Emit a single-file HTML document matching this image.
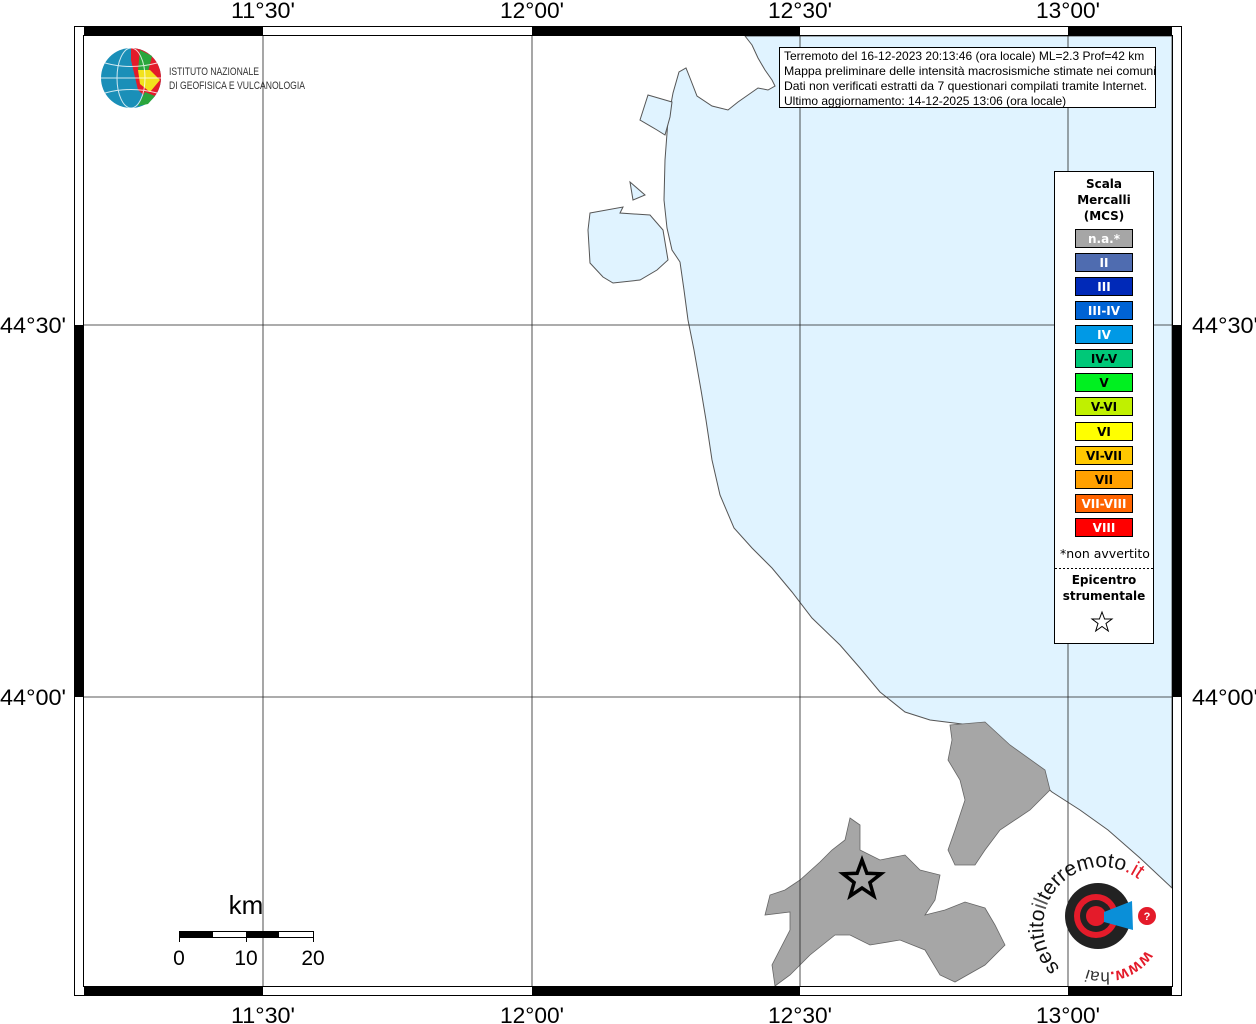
<!DOCTYPE html>
<html><head><meta charset="utf-8"><style>
html,body{margin:0;padding:0;background:#fff;}
svg{display:block;font-family:"Liberation Sans",sans-serif;}
.lbl{font-size:22px;fill:#000;}
.lg{font-family:"DejaVu Sans",sans-serif;font-weight:bold;font-size:12px;text-anchor:middle;}
</style></head><body>
<svg width="1256" height="1024" viewBox="0 0 1256 1024" xmlns="http://www.w3.org/2000/svg">
<rect width="1256" height="1024" fill="#fff"/>
<path d="M745,36 L752,45 L758,58 L765,70 L772,80 L775,86 L768,90 L758,88 L748,95 L738,102 L728,110 L712,106 L697,96 L690,78 L686,68 L679,72 L673,93 L668,120 L665,160 L664,200 L667,228 L672,250 L680,262 L684,290 L688,320 L694,350 L701,390 L706,420 L712,460 L720,495 L734,528 L752,548 L772,568 L792,592 L812,618 L840,645 L860,668 L880,692 L905,712 L930,720 L962,724 L992,745 L1022,766 L1052,792 L1080,810 L1108,830 L1140,858 L1172,888 L1172,36 Z" fill="#e0f3ff" stroke="#555" stroke-width="1"/>
<path d="M590,213 L623,207 L620,213 L650,215 L663,230 L668,260 L657,270 L640,280 L613,283 L603,277 L590,263 L588,230 Z" fill="#e0f3ff" stroke="#555" stroke-width="1"/>
<path d="M630,182 L645,195 L633,200 Z" fill="#e0f3ff" stroke="#555" stroke-width="1"/>
<path d="M640,120 L648,95 L672,102 L670,117 L665,135 L657,130 Z" fill="#e0f3ff" stroke="#555" stroke-width="1"/>
<path d="M950,725 L985,722 L1010,745 L1045,770 L1050,790 L1030,810 L1000,830 L985,850 L975,865 L955,865 L948,850 L955,830 L965,800 L960,780 L948,760 L952,740 Z" fill="#a6a6a6" stroke="#666" stroke-width="0.8"/>
<path d="M850,818 L860,825 L860,850 L880,860 L905,855 L920,870 L940,875 L935,900 L925,915 L945,910 L965,902 L985,908 L995,925 L1005,945 L985,965 L955,982 L940,975 L925,950 L900,940 L870,945 L850,935 L835,935 L810,955 L790,975 L775,986 L772,965 L790,930 L790,912 L765,915 L770,895 L785,890 L800,880 L820,862 L832,850 L845,840 Z" fill="#a6a6a6" stroke="#666" stroke-width="0.8"/>
<g stroke="#222" stroke-width="0.8">
<line x1="263" y1="36" x2="263" y2="986"/><line x1="532" y1="36" x2="532" y2="986"/>
<line x1="800" y1="36" x2="800" y2="986"/><line x1="1068" y1="36" x2="1068" y2="986"/>
<line x1="84" y1="325" x2="1172" y2="325"/><line x1="84" y1="697" x2="1172" y2="697"/>
</g>
<rect x="74.5" y="26.5" width="1107" height="969" fill="none" stroke="#000"/>
<rect x="83.5" y="35.5" width="1089" height="951" fill="none" stroke="#000"/>
<g fill="#000">
<rect x="84" y="27" width="179" height="9"/><rect x="532" y="27" width="268" height="9"/><rect x="1068" y="27" width="104" height="9"/>
<rect x="84" y="986" width="179" height="9"/><rect x="532" y="986" width="268" height="9"/><rect x="1068" y="986" width="104" height="9"/>
<rect x="75" y="325" width="9" height="372"/><rect x="1172" y="325" width="9" height="372"/>
</g>
<g class="lbl" text-anchor="middle">
<text x="263" y="18" textLength="64" lengthAdjust="spacingAndGlyphs">11°30'</text><text x="532" y="18" textLength="64" lengthAdjust="spacingAndGlyphs">12°00'</text><text x="800" y="18" textLength="64" lengthAdjust="spacingAndGlyphs">12°30'</text><text x="1068" y="18" textLength="64" lengthAdjust="spacingAndGlyphs">13°00'</text>
<text x="263" y="1023" textLength="64" lengthAdjust="spacingAndGlyphs">11°30'</text><text x="532" y="1023" textLength="64" lengthAdjust="spacingAndGlyphs">12°00'</text><text x="800" y="1023" textLength="64" lengthAdjust="spacingAndGlyphs">12°30'</text><text x="1068" y="1023" textLength="64" lengthAdjust="spacingAndGlyphs">13°00'</text>
</g>
<g class="lbl"><text x="0" y="333" textLength="66" lengthAdjust="spacingAndGlyphs">44°30'</text><text x="0" y="705" textLength="66" lengthAdjust="spacingAndGlyphs">44°00'</text>
<text x="1192" y="333" textLength="66" lengthAdjust="spacingAndGlyphs">44°30'</text><text x="1192" y="705" textLength="66" lengthAdjust="spacingAndGlyphs">44°00'</text></g>
<circle cx="131" cy="78" r="30" fill="#1a8fb8"/>
<path d="M131,48 A30,30 0 0,1 161,78 A30,30 0 0,1 150,101 L138,90 L131,60 Z" fill="#e41b2a"/>
<path d="M140,50 L152,56 L148,72 L138,70 Z" fill="#2aa63c"/>
<path d="M138,70 L150,70 L160,80 L150,92 L140,84 Z" fill="#f2e21c"/>
<path d="M145,92 L155,96 L148,104 L138,106 Z" fill="#2aa63c"/>
<g stroke="#fff" stroke-width="1" fill="none" opacity="0.8"><ellipse cx="131" cy="78" rx="14" ry="30"/><line x1="101" y1="78" x2="161" y2="78"/><path d="M105,63 Q131,70 157,63"/><path d="M105,93 Q131,86 157,93"/></g>
<text x="169" y="75" font-size="11" fill="#333" textLength="90" lengthAdjust="spacingAndGlyphs">ISTITUTO NAZIONALE</text>
<text x="169" y="89" font-size="11" fill="#333" textLength="136" lengthAdjust="spacingAndGlyphs">DI GEOFISICA E VULCANOLOGIA</text>
<rect x="779.5" y="47.5" width="376" height="60" fill="#fff" stroke="#000"/>
<g font-size="12" fill="#000">
<text x="784" y="60">Terremoto del 16-12-2023 20:13:46 (ora locale) ML=2.3 Prof=42 km</text>
<text x="784" y="75" textLength="372" lengthAdjust="spacingAndGlyphs">Mappa preliminare delle intensità macrosismiche stimate nei comuni</text>
<text x="784" y="90" textLength="363" lengthAdjust="spacingAndGlyphs">Dati non verificati estratti da 7 questionari compilati tramite Internet.</text>
<text x="784" y="105">Ultimo aggiornamento: 14-12-2025 13:06 (ora locale)</text>
</g>
<rect x="1054.5" y="171.5" width="99" height="472" fill="#fff" stroke="#000"/>
<g class="lg"><text x="1104" y="188">Scala</text><text x="1104" y="204">Mercalli</text><text x="1104" y="220">(MCS)</text></g>
<g stroke="#000" stroke-width="1">
<rect x="1075.5" y="229.5" width="57" height="18" fill="#a6a6a6"/>
<rect x="1075.5" y="253.5" width="57" height="18" fill="#4f6cb0"/>
<rect x="1075.5" y="277.5" width="57" height="18" fill="#0029b8"/>
<rect x="1075.5" y="301.5" width="57" height="18" fill="#0063d4"/>
<rect x="1075.5" y="325.5" width="57" height="18" fill="#0099e6"/>
<rect x="1075.5" y="349.5" width="57" height="18" fill="#00c878"/>
<rect x="1075.5" y="373.5" width="57" height="18" fill="#00f020"/>
<rect x="1075.5" y="397.5" width="57" height="18" fill="#c0f000"/>
<rect x="1075.5" y="422.5" width="57" height="18" fill="#ffff00"/>
<rect x="1075.5" y="446.5" width="57" height="18" fill="#ffc800"/>
<rect x="1075.5" y="470.5" width="57" height="18" fill="#ffa000"/>
<rect x="1075.5" y="494.5" width="57" height="18" fill="#ff6400"/>
<rect x="1075.5" y="518.5" width="57" height="18" fill="#ff0000"/>
</g>
<g class="lg" font-size="12.5">
<text x="1104" y="243" fill="#fff">n.a.*</text>
<text x="1104" y="267" fill="#fff">II</text>
<text x="1104" y="291" fill="#fff">III</text>
<text x="1104" y="315" fill="#fff">III-IV</text>
<text x="1104" y="339" fill="#fff">IV</text>
<text x="1104" y="363">IV-V</text>
<text x="1104" y="387">V</text>
<text x="1104" y="411">V-VI</text>
<text x="1104" y="436">VI</text>
<text x="1104" y="460">VI-VII</text>
<text x="1104" y="484">VII</text>
<text x="1104" y="508" fill="#fff">VII-VIII</text>
<text x="1104" y="532" fill="#fff">VIII</text>
</g>
<text x="1105" y="558" font-family="'DejaVu Sans',sans-serif" font-size="12.5" text-anchor="middle">*non avvertito</text>
<line x1="1055" y1="568.5" x2="1153" y2="568.5" stroke="#000" stroke-dasharray="2,2"/>
<g class="lg" font-size="12.5"><text x="1104" y="584">Epicentro</text><text x="1104" y="600">strumentale</text></g>
<path d="M1102,612 L1104.6,619 L1112,619 L1106,623.5 L1108.3,631 L1102,626.5 L1095.7,631 L1098,623.5 L1092,619 L1099.4,619 Z" fill="none" stroke="#000" stroke-width="1"/>
<path d="M862,860 L866.9,873.3 L881,873.8 L869.9,882.5 L873.8,896 L862,888 L850.2,896 L854.1,882.5 L843,873.8 L857.1,873.3 Z" fill="none" stroke="#000" stroke-width="3.5"/>
<text x="246" y="914" font-size="26" text-anchor="middle">km</text>
<rect x="179.5" y="931.5" width="134" height="6" fill="#fff" stroke="#000"/>
<rect x="179" y="931" width="34" height="7" fill="#000"/><rect x="246" y="931" width="33" height="7" fill="#000"/>
<line x1="179.5" y1="931" x2="179.5" y2="942" stroke="#000"/><line x1="246.5" y1="931" x2="246.5" y2="942" stroke="#000"/><line x1="313.5" y1="931" x2="313.5" y2="942" stroke="#000"/>
<g font-size="21" text-anchor="middle"><text x="179" y="965">0</text><text x="246" y="965">10</text><text x="313" y="965">20</text></g>
<circle cx="1098" cy="916" r="33" fill="#222"/>
<circle cx="1096" cy="916" r="22" fill="#e41b2a"/>
<circle cx="1096" cy="916" r="16" fill="#222"/>
<circle cx="1096" cy="916" r="10" fill="#e41b2a"/>
<path d="M1104,912 L1132,901 L1133,930 L1104,922 Z" fill="#0a8fd8"/>
<circle cx="1147" cy="916" r="9" fill="#e41b2a"/>
<text x="1147" y="920" font-size="11" font-weight="bold" fill="#fff" text-anchor="middle">?</text>
<defs><path id="arc" d="M1060,968 A50,50 0 1,1 1145,885"/><path id="arc2" d="M1146,950 A50,50 0 0,1 1080,966"/></defs>
<text font-size="21" fill="#111"><textPath href="#arc">sentito<tspan fill="#555">il</tspan>terremoto<tspan fill="#e41b2a">.it</tspan></textPath></text>
<text font-size="17" fill="#e41b2a" font-weight="bold"><textPath href="#arc2">www.<tspan fill="#333" font-weight="normal">hai</tspan></textPath></text>
</svg>
</body></html>
